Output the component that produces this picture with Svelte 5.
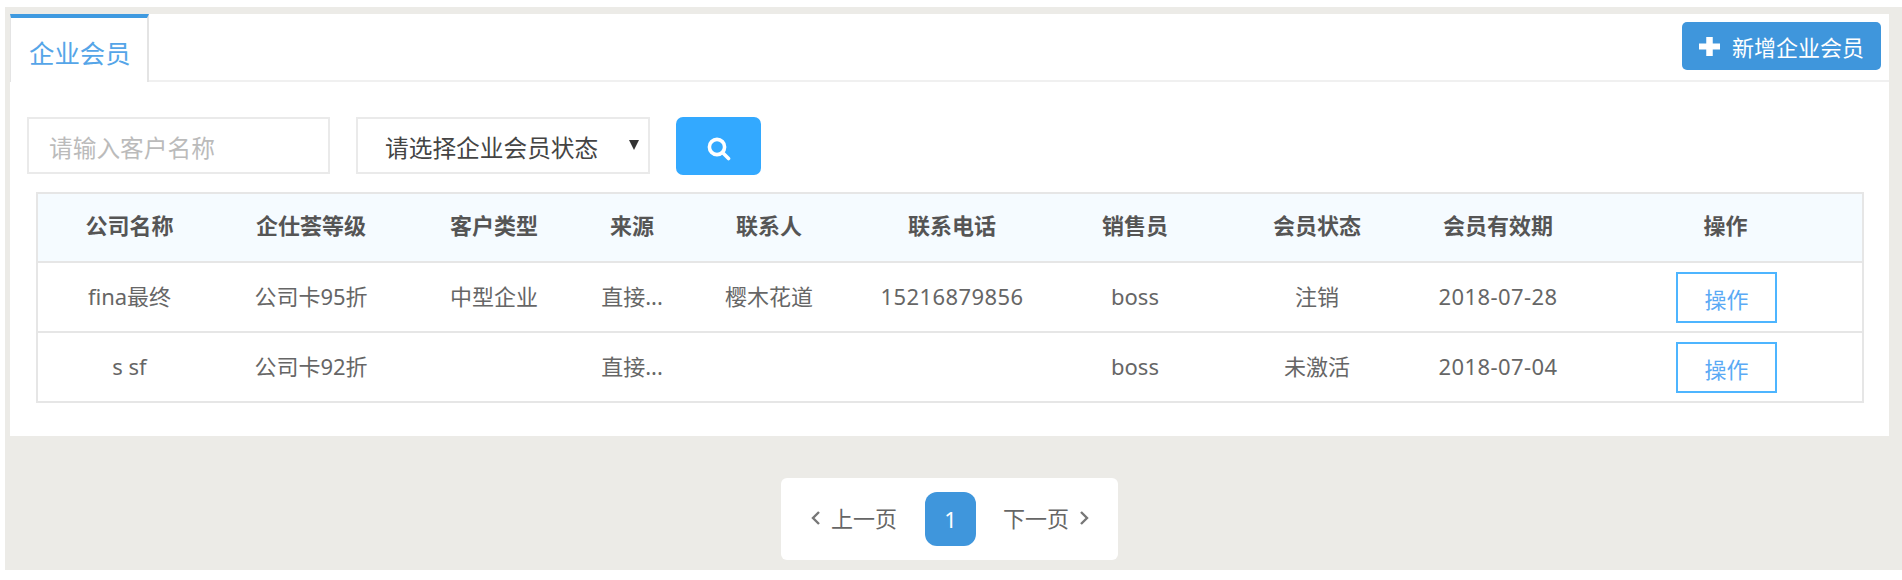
<script lang="ts">
	const columns = [
		{ title: '公司名称', width: 183 },
		{ title: '企仕荟等级', width: 180 },
		{ title: '客户类型', width: 186 },
		{ title: '来源', width: 90 },
		{ title: '联系人', width: 184 },
		{ title: '联系电话', width: 182 },
		{ title: '销售员', width: 184 },
		{ title: '会员状态', width: 180 },
		{ title: '会员有效期', width: 182 },
		{ title: '操作', width: 273 }
	];

	const members = [
		{
			name: 'fina最终',
			level: '公司卡95折',
			type: '中型企业',
			source: '直接...',
			contact: '樱木花道',
			phone: '15216879856',
			sales: 'boss',
			status: '注销',
			expires: '2018-07-28'
		},
		{
			name: 's sf',
			level: '公司卡92折',
			type: '',
			source: '直接...',
			contact: '',
			phone: '',
			sales: 'boss',
			status: '未激活',
			expires: '2018-07-04'
		}
	];
</script>

<div class="page">
	<div class="card">
		<div class="card-head">
			<div class="tab">企业会员</div>
			<button class="add-btn">
				<svg width="21" height="19" viewBox="0 0 21 19">
					<path d="M7.25 0h6.5v6.5H21v6h-7.25V19h-6.5v-6.5H0v-6h7.25z" fill="#fff" />
				</svg>
				新增企业会员
			</button>
		</div>

		<div class="filters">
			<input class="field name-input" placeholder="请输入客户名称" />
			<div class="select-wrap">
				<select class="field status-select">
					<option>请选择企业会员状态</option>
					<option>注销</option>
					<option>未激活</option>
				</select>
			</div>
			<button class="search-btn" aria-label="搜索">
				<svg width="24" height="24" viewBox="0 0 24 24" fill="none" stroke="#fff">
					<circle cx="10" cy="10" r="7.6" stroke-width="3.6" />
					<path d="M16 16l5.5 5.5" stroke-width="3.6" stroke-linecap="round" />
				</svg>
			</button>
		</div>

		<table class="member-table">
			<colgroup>
				{#each columns as col}
					<col style="width: {col.width}px" />
				{/each}
			</colgroup>
			<thead>
				<tr>
					{#each columns as col}
						<th>{col.title}</th>
					{/each}
				</tr>
			</thead>
			<tbody>
				{#each members as m}
					<tr>
						<td>{m.name}</td>
						<td>{m.level}</td>
						<td>{m.type}</td>
						<td>{m.source}</td>
						<td>{m.contact}</td>
						<td class="num">{m.phone}</td>
						<td>{m.sales}</td>
						<td>{m.status}</td>
						<td class="num">{m.expires}</td>
						<td class="actions"><button class="op-btn">操作</button></td>
					</tr>
				{/each}
			</tbody>
		</table>
	</div>

	<div class="pager">
		<a class="page-link" href="#prev">
			<svg width="10" height="16" viewBox="0 0 10 16" fill="none" stroke="#777" stroke-width="2.4">
				<path d="M8 2L2 8l6 6" />
			</svg>
			上一页
		</a>
		<span class="page-num">1</span>
		<a class="page-link" href="#next">
			下一页
			<svg width="10" height="16" viewBox="0 0 10 16" fill="none" stroke="#777" stroke-width="2.4">
				<path d="M2 2l6 6-6 6" />
			</svg>
		</a>
	</div>
</div>

<style>
	:global(body) {
		background: #fff;
	}

	.page {
		box-sizing: border-box;
		height: 563px;
		margin: 7px 0 0 5px;
		padding: 7px 13px 0 5px;
		background: #ecebe7;
		font-family: 'Noto Sans', 'Noto Sans CJK SC', sans-serif;
		font-size: 22px;
		line-height: 30px;
		color: #666;
	}

	.card {
		box-sizing: border-box;
		height: 422px;
		background: #fff;
	}

	.card-head {
		display: flex;
		justify-content: space-between;
		align-items: flex-start;
		box-sizing: border-box;
		height: 68px;
		border-bottom: 2px solid #f0f0f0;
	}

	.tab {
		box-sizing: border-box;
		width: 139px;
		height: 68px;
		padding: 15px 0 0 18px;
		border-top: 4px solid #3f9ae0;
		border-left: 1px solid #e4e4e4;
		border-right: 2px solid #e4e4e4;
		background: #fff;
		font-size: 25.4px;
		line-height: 40px;
		color: #55a5e8;
	}

	.add-btn {
		display: flex;
		align-items: center;
		gap: 12px;
		box-sizing: border-box;
		width: 199px;
		height: 48px;
		margin: 8px 8px 0 0;
		padding: 0 0 0 17px;
		border: none;
		border-radius: 5px;
		background: #3f96dc;
		font-family: inherit;
		font-size: 22px;
		color: #fff;
	}

	.filters {
		display: flex;
		gap: 26px;
		margin: 35px 0 17px 17px;
	}

	.field {
		box-sizing: border-box;
		height: 57px;
		border: 2px solid #eaeaea;
		border-radius: 0;
		background: #fff;
		outline: none;
		font-family: inherit;
		font-size: 23.7px;
	}

	.name-input {
		width: 303px;
		padding: 4px 20px 0;
	}

	.name-input::placeholder {
		color: #bbb;
		opacity: 1;
	}

	.select-wrap {
		position: relative;
	}

	.select-wrap::after {
		content: '';
		position: absolute;
		top: 23px;
		right: 11px;
		border-top: 10px solid #333;
		border-left: 5.5px solid transparent;
		border-right: 5.5px solid transparent;
	}

	.status-select {
		width: 294px;
		padding: 4px 0 0 27px;
		appearance: none;
		color: #444;
	}

	.search-btn {
		display: flex;
		align-items: center;
		justify-content: center;
		width: 85px;
		height: 58px;
		padding: 5px 0 0;
		border: none;
		border-radius: 7px;
		background: #33a9ff;
	}

	.member-table {
		box-sizing: border-box;
		width: 1828px;
		margin-left: 26px;
		border: 2px solid #e6e6e6;
		border-spacing: 0;
		table-layout: fixed;
		text-align: center;
	}

	th,
	td {
		padding: 0;
		box-sizing: border-box;
		border-bottom: 2px solid #e6e6e6;
	}

	th {
		height: 69px;
		padding-bottom: 5px;
		background: #f5fbff;
		font-weight: 700;
		color: #555;
	}

	td {
		height: 70px;
		padding-bottom: 3px;
	}

	td.num {
		letter-spacing: 0.4px;
	}

	td.actions {
		padding: 0 0 0 2px;
	}

	tbody tr:last-child td {
		height: 68px;
		border-bottom: none;
	}

	.op-btn {
		box-sizing: border-box;
		width: 101px;
		height: 51px;
		padding: 1px 0 0;
		border: 2px solid #4db5ff;
		background: #fff;
		font-family: inherit;
		font-size: 22px;
		color: #5aaaf5;
		vertical-align: middle;
	}

	.pager {
		display: flex;
		align-items: center;
		box-sizing: border-box;
		width: 337px;
		height: 82px;
		margin: 42px 0 0 771px;
		padding-left: 30px;
		border-radius: 6px;
		background: #fff;
	}

	.page-link {
		display: flex;
		align-items: center;
		gap: 10px;
		padding-bottom: 2px;
		color: #666;
		text-decoration: none;
	}

	.page-num {
		display: flex;
		align-items: center;
		justify-content: center;
		width: 51px;
		height: 54px;
		margin: 0 27px 0 28px;
		border-radius: 12px;
		background: #3f96dc;
		color: #fff;
	}
</style>
